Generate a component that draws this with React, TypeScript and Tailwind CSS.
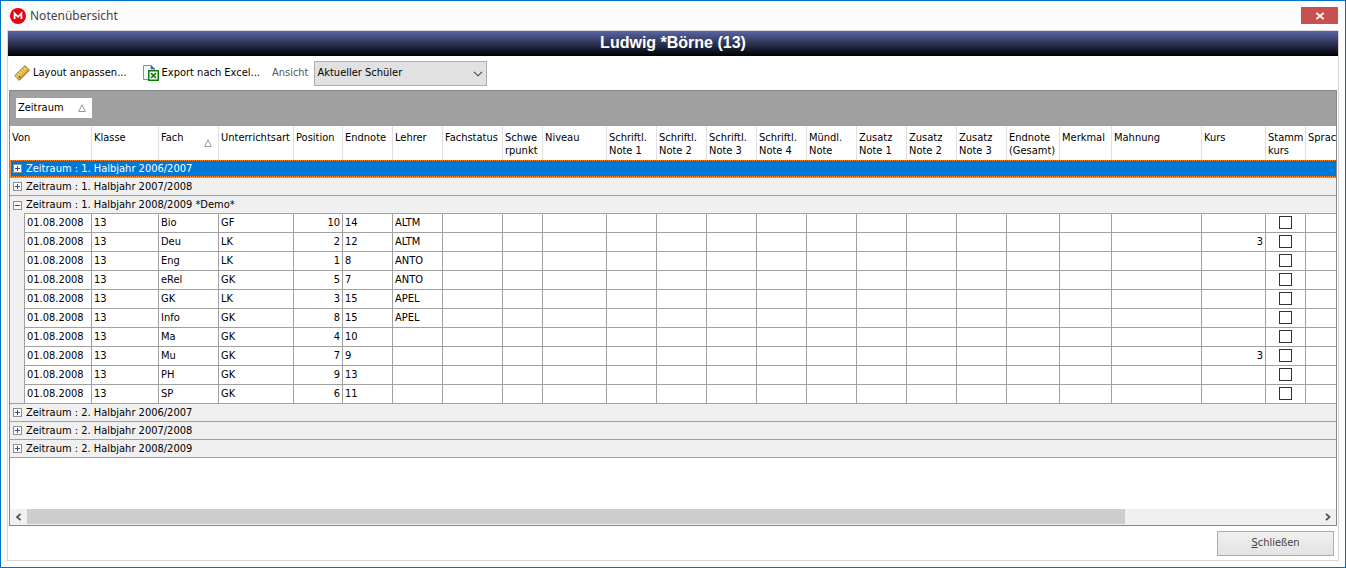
import { Fragment, useState } from "react";

type Row = {
  fach: string;
  art: string;
  position: number;
  endnote: number;
  lehrer?: string;
  kurs?: number;
};

type Group = { id: string; label: string; rows: Row[] };

const COLUMNS = [
  { label: "Klasse", width: 67 },
  { label: "Fach", width: 60, sorted: true },
  { label: "Unterrichtsart", width: 75 },
  { label: "Position", width: 49 },
  { label: "Endnote", width: 50 },
  { label: "Lehrer", width: 50 },
  { label: "Fachstatus", width: 60 },
  { label: "Schwe\nrpunkt", width: 40 },
  { label: "Niveau", width: 64 },
  { label: "Schriftl.\nNote 1", width: 50 },
  { label: "Schriftl.\nNote 2", width: 50 },
  { label: "Schriftl.\nNote 3", width: 50 },
  { label: "Schriftl.\nNote 4", width: 50 },
  { label: "Mündl.\nNote", width: 50 },
  { label: "Zusatz\nNote 1", width: 50 },
  { label: "Zusatz\nNote 2", width: 50 },
  { label: "Zusatz\nNote 3", width: 50 },
  { label: "Endnote\n(Gesamt)", width: 53 },
  { label: "Merkmal", width: 52 },
  { label: "Mahnung", width: 90 },
  { label: "Kurs", width: 64 },
  { label: "Stamm\nkurs", width: 40 },
];

const GROUPS: Group[] = [
  { id: "h1-2006", label: "1. Halbjahr 2006/2007", rows: [] },
  { id: "h1-2007", label: "1. Halbjahr 2007/2008", rows: [] },
  {
    id: "h1-2008",
    label: "1. Halbjahr 2008/2009 *Demo*",
    rows: [
      { fach: "Bio", art: "GF", position: 10, endnote: 14, lehrer: "ALTM" },
      { fach: "Deu", art: "LK", position: 2, endnote: 12, lehrer: "ALTM", kurs: 3 },
      { fach: "Eng", art: "LK", position: 1, endnote: 8, lehrer: "ANTO" },
      { fach: "eRel", art: "GK", position: 5, endnote: 7, lehrer: "ANTO" },
      { fach: "GK", art: "LK", position: 3, endnote: 15, lehrer: "APEL" },
      { fach: "Info", art: "GK", position: 8, endnote: 15, lehrer: "APEL" },
      { fach: "Ma", art: "GK", position: 4, endnote: 10 },
      { fach: "Mu", art: "GK", position: 7, endnote: 9, kurs: 3 },
      { fach: "PH", art: "GK", position: 9, endnote: 13 },
      { fach: "SP", art: "GK", position: 6, endnote: 11 },
    ],
  },
  { id: "h2-2006", label: "2. Halbjahr 2006/2007", rows: [] },
  { id: "h2-2007", label: "2. Halbjahr 2007/2008", rows: [] },
  { id: "h2-2008", label: "2. Halbjahr 2008/2009", rows: [] },
];

// Columns from "Fachstatus" up to "Mahnung" carry no values.
const EMPTY_BEFORE_KURS = Array.from({ length: 14 }, (_, i) => i);

function AppIcon() {
  return (
    <svg viewBox="0 0 16 16" className="size-4" aria-hidden="true">
      <circle cx="8" cy="8" r="8" fill="#e30613" />
      <path d="M4.6 11V5.4L8 8.8l3.4-3.4V11" fill="none" stroke="#fff" strokeWidth="1.8" />
    </svg>
  );
}

function RulerIcon() {
  return (
    <svg viewBox="0 0 16 16" className="size-4" aria-hidden="true">
      <path d="M0.5 10.8 10.8 0.6l4.7 4.2L5.2 15.4Z" fill="#e0b545" stroke="#a87c1e" strokeWidth="0.8" />
      <path d="M1.6 10.8 10.8 1.7l1.6 1.4L3.2 12.3Z" fill="#f4d980" />
      <path d="m2.6 9.6 1 1M4.6 7.6l1 1M6.6 5.6l1 1M8.6 3.6l1 1M10.6 1.7l1 1" stroke="#5c4210" strokeWidth="0.9" />
      <circle cx="5.6" cy="12" r="0.9" fill="#7c5a14" />
      <path d="M5.4 15.1 15.2 5" stroke="#7c5a14" strokeWidth="0.9" />
    </svg>
  );
}

function ExcelIcon() {
  return (
    <svg viewBox="0 0 16 16" className="size-4" aria-hidden="true">
      <path d="M0.5 0.5h7.5l3.5 3.5v10.5h-11Z" fill="#f2f7ff" stroke="#6a92d0" />
      <path d="M8 0.5V4h3.5Z" fill="#3f5f9d" stroke="#3f5f9d" strokeWidth="0.6" />
      <rect x="5.75" y="5.75" width="9.5" height="9.5" fill="#fff" stroke="#0b7a0b" strokeWidth="1.5" />
      <path d="m8 8.2 5 4.8M13 8.2l-5 4.8" stroke="#0b7a0b" strokeWidth="1.7" />
    </svg>
  );
}

function SortMark() {
  return (
    <svg viewBox="0 0 8 8" className="h-2 w-2 shrink-0" aria-hidden="true">
      <path d="M4 0.8 7.3 7.5H0.7Z" fill="none" stroke="#8c8c8c" strokeWidth="0.9" />
    </svg>
  );
}

function Toggle({ open, label, onClick }: { open: boolean; label: string; onClick: () => void }) {
  return (
    <button
      type="button"
      aria-expanded={open}
      aria-label={label}
      onClick={onClick}
      className="size-[9px] shrink-0 border border-[#8f8f8f] bg-white"
    >
      <svg viewBox="0 0 7 7" className="block size-[7px]" aria-hidden="true">
        <path d={open ? "M1 3.5h5" : "M1 3.5h5M3.5 1v5"} stroke="#33499c" fill="none" />
      </svg>
    </button>
  );
}

function Cell({ children, right = false }: { children?: React.ReactNode; right?: boolean }) {
  return (
    <td
      className={
        right
          ? "h-[19px] border-r border-b border-[#a0a0a0] bg-white px-0.5 pb-0.5 text-right"
          : "h-[19px] border-r border-b border-[#a0a0a0] bg-white px-0.5 pb-0.5"
      }
    >
      {children}
    </td>
  );
}

function DetailRow({ row, first, span }: { row: Row; first: boolean; span: number }) {
  return (
    <tr>
      {first && <td rowSpan={span} className="border-r border-b border-[#a0a0a0] bg-[#f0f0f0]" />}
      <Cell>01.08.2008</Cell>
      <Cell>13</Cell>
      <Cell>{row.fach}</Cell>
      <Cell>{row.art}</Cell>
      <Cell right>{row.position}</Cell>
      <Cell>{row.endnote}</Cell>
      <Cell>{row.lehrer}</Cell>
      {EMPTY_BEFORE_KURS.map((i) => (
        <Cell key={i} />
      ))}
      <Cell right>{row.kurs}</Cell>
      <Cell>
        <input
          type="checkbox"
          aria-label={`Stammkurs ${row.fach}`}
          className="mx-auto block size-[13px] appearance-none border border-[#333333] bg-white checked:bg-[#333333]"
        />
      </Cell>
      <td className="h-[19px] border-b border-[#a0a0a0] bg-white" />
    </tr>
  );
}

function GradeTable() {
  const [open, setOpen] = useState<string[]>(["h1-2008"]);
  const selected = "h1-2006";
  const toggle = (id: string) =>
    setOpen((ids) => (ids.includes(id) ? ids.filter((x) => x !== id) : [...ids, id]));

  return (
    <table className="w-full min-w-[1326px] table-fixed border-separate border-spacing-0 text-left leading-[13px] whitespace-nowrap">
      <colgroup>
        <col className="w-[15px]" />
        <col className="w-[67px]" />
        {COLUMNS.map((c) => (
          <col key={c.label} style={{ width: c.width }} />
        ))}
        <col />
      </colgroup>
      <thead>
        <tr className="h-[34px] align-top">
          <th colSpan={2} className="border-r border-[#e0e0e0] pt-[5px] pl-0.5 font-normal">
            Von
          </th>
          {COLUMNS.map((c) => (
            <th key={c.label} className="border-r border-[#e0e0e0] pt-[5px] pl-0.5 font-normal whitespace-pre">
              {c.sorted ? (
                <div className="flex justify-between pr-1.5">
                  {c.label}
                  <div className="pt-2">
                    <SortMark />
                  </div>
                </div>
              ) : (
                c.label
              )}
            </th>
          ))}
          <th className="overflow-hidden pt-[5px] pl-0.5 font-normal">Sprac</th>
        </tr>
      </thead>
      <tbody>
        {GROUPS.map((g) => {
          const expanded = open.includes(g.id);
          const hasRows = expanded && g.rows.length > 0;
          return (
            <Fragment key={g.id}>
              <tr>
                <td colSpan={COLUMNS.length + 3} className="p-0">
                  {g.id === selected ? (
                    <div className="h-[18px] border-b border-[#a0a0a0]">
                      <div className="h-[17px] bg-[repeating-linear-gradient(90deg,#ff8728_0px,#ff8728_1px,#0078d7_1px,#0078d7_2px)] p-px">
                        <div className="flex h-[15px] items-center gap-1 bg-[#0078d7] pl-0.5 text-white">
                          <Toggle open={expanded} label={g.label} onClick={() => toggle(g.id)} />
                          Zeitraum : {g.label}
                        </div>
                      </div>
                    </div>
                  ) : (
                    <div className="flex h-[18px] bg-[#f0f0f0]">
                      <div
                        className={
                          hasRows
                            ? "flex w-3.5 items-center pl-[3px]"
                            : "flex w-3.5 items-center border-b border-[#a0a0a0] pl-[3px]"
                        }
                      >
                        <Toggle open={expanded} label={g.label} onClick={() => toggle(g.id)} />
                      </div>
                      <div className="flex flex-1 items-center border-b border-[#a0a0a0] pl-0.5">
                        Zeitraum : {g.label}
                      </div>
                    </div>
                  )}
                </td>
              </tr>
              {hasRows &&
                g.rows.map((row, i) => (
                  <DetailRow key={row.fach} row={row} first={i === 0} span={g.rows.length} />
                ))}
            </Fragment>
          );
        })}
      </tbody>
    </table>
  );
}

function ScrollBar() {
  return (
    <div className="flex h-4 bg-[#f0f0f0]">
      <button type="button" aria-label="Nach links" className="flex w-[17px] items-center justify-center">
        <svg viewBox="0 0 8 8" className="size-2" aria-hidden="true">
          <path d="M5.5 0.8 2 4l3.5 3.2" fill="none" stroke="#505050" strokeWidth="1.8" />
        </svg>
      </button>
      <div className="flex-1 pb-px">
        <div className="h-full w-[85%] bg-[#cdcdcd]" />
      </div>
      <button type="button" aria-label="Nach rechts" className="flex w-[17px] items-center justify-center">
        <svg viewBox="0 0 8 8" className="size-2" aria-hidden="true">
          <path d="M2 0.8 5.5 4 2 7.2" fill="none" stroke="#505050" strokeWidth="1.8" />
        </svg>
      </button>
    </div>
  );
}

export default function App() {
  return (
    <div className="flex min-h-screen flex-col border border-[#0072c6] bg-[#fcfcfc] px-1.5 pb-1.5 font-['DejaVu_Sans_Condensed','Noto_Sans',sans-serif] text-[11px] text-black">
      <header className="flex h-[29px] items-center justify-between pr-px pl-[3px]">
        <div className="flex items-center gap-1 font-['Noto_Sans',sans-serif] text-xs text-[#444444]">
          <AppIcon />
          <span>Notenübersicht</span>
        </div>
        <button
          type="button"
          aria-label="Fenster schließen"
          className="flex h-[17px] w-[37px] items-center justify-center bg-[#c75050]"
        >
          <svg viewBox="0 0 8 8" className="size-2" aria-hidden="true">
            <path d="M0.4 0.8 7.6 7.2M7.6 0.8.4 7.2" stroke="#fff" strokeWidth="1.8" />
          </svg>
        </button>
      </header>

      <main className="flex flex-1 flex-col border border-[#d5d5d5] bg-white">
        <h1 className="h-[25px] bg-linear-to-b/srgb from-[#5a66a6] to-black text-center font-['Liberation_Sans',sans-serif] text-base leading-[24px] font-bold text-white">
          Ludwig *Börne (13)
        </h1>

        <div className="flex h-[34px] items-center pl-1.5">
          <button type="button" className="flex items-center gap-[3px]">
            <RulerIcon />
            Layout anpassen...
          </button>
          <button type="button" className="ml-4 flex items-center gap-[3px]">
            <ExcelIcon />
            Export nach Excel...
          </button>
          <label htmlFor="ansicht" className="ml-3 text-[#555555]">
            Ansicht
          </label>
          <div className="relative ml-1.5">
            <select
              id="ansicht"
              className="block h-[25px] w-[173px] appearance-none border border-[#adadad] bg-[#e1e1e1] pl-0.5"
            >
              <option>Aktueller Schüler</option>
            </select>
            <svg
              viewBox="0 0 10 6"
              className="pointer-events-none absolute top-[10px] right-1 h-1.5 w-2.5"
              aria-hidden="true"
            >
              <path d="M1 0.8 5 4.8l4-4" fill="none" stroke="#444" strokeWidth="1.1" />
            </svg>
          </div>
        </div>

        <section className="mx-px flex flex-1 flex-col overflow-hidden border border-[#828790]">
          <div className="h-[35px] bg-[#a0a0a0] px-1.5 pt-[7px]">
            <button type="button" className="flex h-5 w-[76px] items-center justify-between bg-white pr-1.5 pl-0.5">
              Zeitraum
              <SortMark />
            </button>
          </div>
          <div className="flex-1 overflow-hidden">
            <GradeTable />
          </div>
          <ScrollBar />
        </section>

        <footer className="flex justify-end px-1 pt-[5px] pb-1">
          <button
            type="button"
            className="h-[25px] w-[117px] border border-[#adadad] bg-linear-to-b from-[#f0f0f0] to-[#e3e3e3] text-[#444444]"
          >
            <span className="underline">S</span>chließen
          </button>
        </footer>
      </main>
    </div>
  );
}
